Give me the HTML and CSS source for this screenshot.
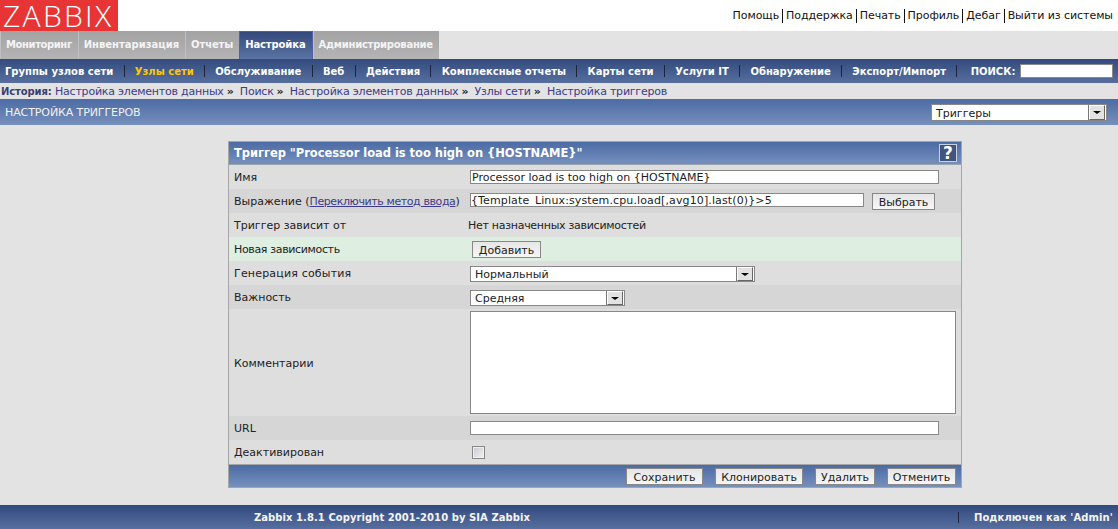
FILE: index.html
```html
<!DOCTYPE html>
<html lang="ru">
<head>
<meta charset="utf-8">
<title>Zabbix</title>
<link rel="stylesheet" href="styles.css">
</head>
<body>
<header class="top">
  <div class="logo">ZABBIX</div>
  <nav class="toplinks">
    <a>Помощь</a><a>Поддержка</a><a>Печать</a><a>Профиль</a><a>Дебаг</a><a>Выйти из системы</a>
  </nav>
</header>
<nav class="tabs">
  <a class="tab first">Мониторинг</a><a class="tab">Инвентаризация</a><a class="tab snug">Отчеты</a><a class="tab active snug">Настройка</a><a class="tab admin">Администрирование</a>
</nav>
<nav class="subnav">
  <a>Группы узлов сети</a><i></i>
  <a class="current">Узлы сети</a><i></i>
  <a>Обслуживание</a><i></i>
  <a>Веб</a><i></i>
  <a>Действия</a><i></i>
  <a>Комплексные отчеты</a><i></i>
  <a>Карты сети</a><i></i>
  <a>Услуги IT</a><i></i>
  <a>Обнаружение</a><i></i>
  <a>Экспорт/Импорт</a><i></i>
  <span class="search">ПОИСК:<input class="searchbox" type="text"></span>
</nav>
<div class="crumbs">
  <b>История:</b>
  <a>Настройка элементов данных</a><em>»</em>
  <a>Поиск</a><em>»</em>
  <a>Настройка элементов данных</a><em>»</em>
  <a>Узлы сети</a><em>»</em>
  <a>Настройка триггеров</a>
</div>
<div class="titlebar">
  <span class="pagetitle">НАСТРОЙКА ТРИГГЕРОВ</span>
  <div class="select pageselect">Триггеры<span class="arrow"></span></div>
</div>
<main class="content">
  <form class="card">
    <div class="cardhead">
      <span>Триггер "Processor load is too high on {HOSTNAME}"</span>
      <span class="help">?</span>
    </div>
    <div class="row">
      <label>Имя</label>
      <div class="val"><input class="field wide" type="text" value="Processor load is too high on {HOSTNAME}"></div>
    </div>
    <div class="row alt">
      <label>Выражение (<a class="link">Переключить метод ввода</a>)</label>
      <div class="val"><input class="field expr" type="text" value="{Template_Linux:system.cpu.load[,avg10].last(0)}&gt;5"><button class="btn pick" type="button">Выбрать</button></div>
    </div>
    <div class="row">
      <label>Триггер зависит от</label>
      <div class="val plain">Нет назначенных зависимостей</div>
    </div>
    <div class="row new">
      <label class="tight">Новая зависимость</label>
      <div class="val"><button class="btn add" type="button">Добавить</button></div>
    </div>
    <div class="row">
      <label class="loose">Генерация события</label>
      <div class="val"><div class="select evsel">Нормальный<span class="arrow"></span></div></div>
    </div>
    <div class="row alt">
      <label>Важность</label>
      <div class="val"><div class="select sevsel">Средняя<span class="arrow"></span></div></div>
    </div>
    <div class="row tall">
      <label class="lower">Комментарии</label>
      <div class="val"><textarea class="field area"></textarea></div>
    </div>
    <div class="row alt">
      <label>URL</label>
      <div class="val"><input class="field wide" type="text"></div>
    </div>
    <div class="row">
      <label>Деактивирован</label>
      <div class="val"><span class="check"></span></div>
    </div>
    <div class="cardfoot">
      <button class="btn save" type="button">Сохранить</button>
      <button class="btn clone" type="button">Клонировать</button>
      <button class="btn del" type="button">Удалить</button>
      <button class="btn cancel" type="button">Отменить</button>
    </div>
  </form>
</main>
<footer class="foot">
  <span class="copy">Zabbix 1.8.1 Copyright 2001-2010 by SIA Zabbix</span>
  <span class="user">Подключен как 'Admin'</span>
</footer>
</body>
</html>
```
FILE: styles.css
```css
* { box-sizing: border-box; }
html, body { margin: 0; height: 100%; }
body {
  width: 1118px;
  height: 529px;
  overflow: hidden;
  background: #e3e3e3;
  color: #1c1c1c;
  font: 11px/13px "DejaVu Sans", Verdana, sans-serif;
  display: flex;
  flex-direction: column;
}
.top {
  height: 31px;
  background: #fff;
  display: flex;
  justify-content: space-between;
}
.logo {
  width: 118px;
  height: 31px;
  background: #e73535;
  color: #fff;
  font: 300 30px/31px "Open Sans", sans-serif;
  letter-spacing: 2.3px;
  padding-left: 3px;
  white-space: nowrap;
}
.toplinks {
  display: flex;
  align-items: flex-start;
  padding: 9px 5px 0 0;
  color: #111;
  font-size: 11px;
  line-height: 14px;
  letter-spacing: -0.06px;
}
.toplinks a { padding: 0 3px; border-left: 1px solid #111; line-height: 14px; }
.toplinks a:first-child { border-left: 0; }
.toplinks a:last-child { padding-right: 0; }
.tabs {
  height: 28px;
  display: flex;
  background: #e3e3e3;
}
.tab {
  height: 28px;
  padding: 0 6px 0 5px;
  background: linear-gradient(#a3a3a3, #b4b4b4);
  border-left: 1px solid #c0c0c0;
  color: #f4f4f4;
  font-weight: bold;
  font-size: 10px;
  line-height: 28px;
  white-space: nowrap;
}
.tab.first { letter-spacing: -0.4px; }
.tab.snug { letter-spacing: -0.12px; }
.tab.admin { letter-spacing: -0.25px; }
.tab.active {
  background: linear-gradient(#34497c, #5a74a3);
  border: 1px solid #5560a0;
  border-bottom: 0;
  color: #fff;
  line-height: 26px;
}
.subnav {
  height: 24px;
  background: linear-gradient(#334a7e, #566f9f);
  display: flex;
  align-items: center;
  padding-left: 5px;
  color: #fff;
  font-weight: bold;
  font-size: 10px;
}
.subnav a { white-space: nowrap; }
.subnav i {
  width: 1px;
  height: 12px;
  margin: 0 10.3px;
  background: #1e2440;
}
.subnav .current { color: #ffc800; }
.search { margin-left: 3px; display: flex; align-items: center; gap: 5px; white-space: nowrap; }
.searchbox {
  width: 93px;
  height: 14px;
  border: 1px solid #888;
  background: #fff;
  padding: 0;
}
.crumbs {
  height: 16px;
  padding-left: 1px;
  font-size: 11px;
  line-height: 17px;
  color: #3b3b8c;
  white-space: nowrap;
  letter-spacing: -0.22px;
}
.crumbs b { color: #3a3f70; font-size: 10px; letter-spacing: -0.1px; }
.crumbs em { font-style: normal; font-weight: bold; color: #222; margin: 0 3px; }
.titlebar {
  height: 26px;
  background: linear-gradient(#4c6ba5, #7690bc);
  color: #f2f2f2;
  display: flex;
  justify-content: space-between;
  align-items: center;
  padding: 0 11px 0 5px;
}
.pagetitle { letter-spacing: -0.1px; }
.select {
  height: 16px;
  position: relative;
  background: #fff;
  border: 1px solid #888;
  color: #222;
  line-height: 16px;
  padding-left: 4px;
}
.arrow {
  position: absolute;
  top: 0;
  bottom: 0;
  right: 1px;
  width: 16px;
  background: #e2e2e2;
  border: 1px solid #666;
  border-top-color: #fff;
  border-left-color: #fff;
  box-shadow: -1px 0 0 #777;
}
.arrow::after {
  content: "";
  position: absolute;
  left: 3px;
  top: 5px;
  border: 3px solid transparent;
  border-top: 3px solid #000;
  border-left-width: 4px;
  border-right-width: 4px;
}
.pageselect { width: 176px; height: 17px; margin-top: 1px; line-height: 17px; }
.content {
  flex: 1;
  padding: 16px 0 0 228px;
}
.card {
  width: 734px;
  height: 347px;
  border: 1px solid #a6a6a6;
  background: #dedede;
  display: flex;
  flex-direction: column;
}
.cardhead {
  height: 23px;
  flex: none;
  background: linear-gradient(#4c6ba5, #7690bc);
  color: #fff;
  font-size: 11.5px;
  letter-spacing: -0.04px;
  font-weight: bold;
  display: flex;
  justify-content: space-between;
  align-items: center;
  padding: 0 4px 0 5px;
  border-bottom: 1px solid #9aa3b2;
}
.help {
  width: 18px;
  height: 18px;
  border: 1px solid #c8d0de;
  background: #40557f;
  color: #fff;
  font-size: 17px;
  line-height: 17px;
  text-align: center;
}
.row {
  height: 24px;
  flex: none;
  display: flex;
  align-items: center;
}
.row.alt { background: #d6d6d6; }
.row.new { background: #deeee0; }
.row.tall { height: 107px; background: #dedede; }
.row label { width: 239px; padding-left: 5px; color: #222; white-space: nowrap; }
.row label.tight { letter-spacing: -0.35px; }
.row label.loose { letter-spacing: 0.18px; }
.row label.lower { padding-top: 1px; }
.link { color: #3b3b8c; text-decoration: underline; letter-spacing: -0.4px; }
.val { display: flex; align-items: center; padding-left: 2px; }
.val.plain { padding-left: 0; color: #222; letter-spacing: -0.28px; }
.field {
  display: block;
  border: 1px solid #888;
  background: #fff;
  color: #1c1c1c;
  font: 11px "DejaVu Sans", Verdana, sans-serif;
  padding: 0 1px;
  border-radius: 0;
  margin: 0;
  outline: 0;
}
.wide { width: 469px; height: 14px; }
.expr { width: 394px; height: 14px; padding: 0; letter-spacing: 0.12px; margin-bottom: 2px; }
.area { width: 486px; height: 103px; resize: none; }
.btn {
  height: 17px;
  padding: 2px 0 0;
  border: 1px solid #888;
  border-radius: 0;
  background: linear-gradient(#e6e6e6, #f6f6f6);
  color: #222;
  font: 11px/13px "DejaVu Sans", Verdana, sans-serif;
}
.pick { margin-left: 8px; width: 63px; margin-top: 1px; }
.add { margin-left: 2px; width: 69px; }
.save { width: 77px; }
.clone { width: 88px; }
.del { width: 60px; }
.cancel { width: 69px; }
.evsel { width: 285px; line-height: 16px; margin-top: 1px; }
.sevsel { width: 155px; line-height: 16px; margin-top: 1px; }
.check {
  margin-left: 2px;
  width: 13px;
  height: 13px;
  border: 1px solid #888;
  background: linear-gradient(135deg, #c8c8d0, #f4f4f4);
  box-shadow: inset 0 0 0 1px #eee;
}
.cardfoot {
  height: 23px;
  flex: none;
  border-top: 1px solid #a6a6a6;
  background: linear-gradient(#4c6ba5, #7690bc);
  display: flex;
  justify-content: flex-end;
  align-items: center;
  gap: 12px;
  padding: 1px 5px 0 0;
}
.foot {
  height: 24px;
  flex: none;
  background: linear-gradient(#334a7e, #566f9f);
  color: #f4f4f4;
  font-weight: bold;
  font-size: 10px;
  display: flex;
  justify-content: space-between;
  align-items: center;
  padding: 0 5px 0 254px;
}
.copy { letter-spacing: 0.06px; }
.user { border-left: 1px solid #1e2440; padding-left: 15px; line-height: 11px; letter-spacing: 0.1px; }
```
